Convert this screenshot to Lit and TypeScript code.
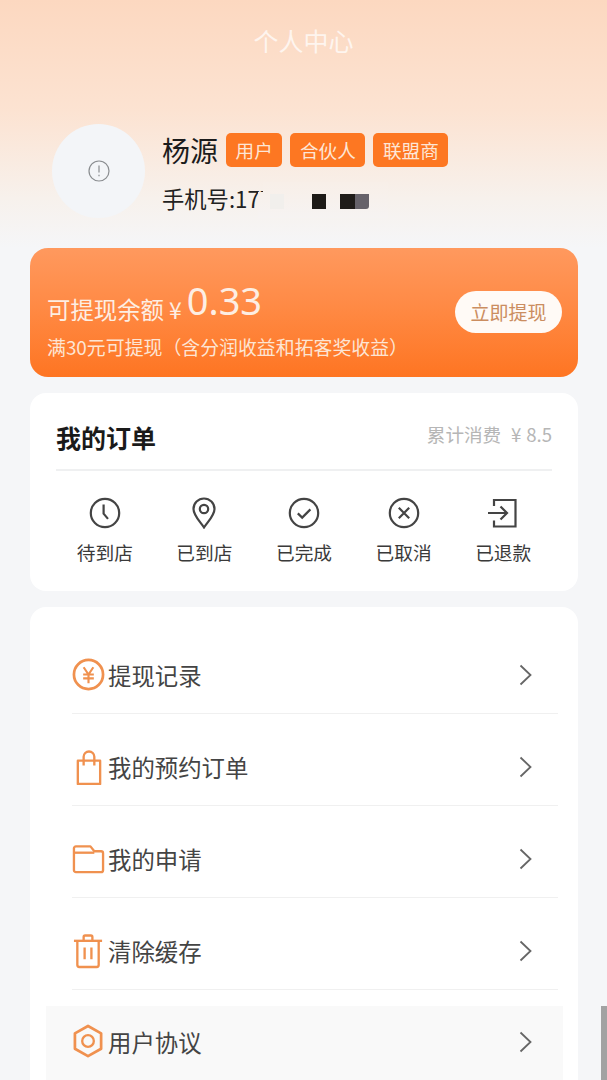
import { LitElement, html, css, svg } from "lit";
import { customElement } from "lit/decorators.js";

const orderIcons = {
  clock: svg`<circle cx="16" cy="16" r="14.2"/><path d="M14.6 7.5v9.2l4.4 5.2"/>`,
  pin: svg`<path d="M16 30.5 C12 24.5 5.5 18.5 5.5 12 A10.5 10.5 0 0 1 26.5 12 C26.5 18.5 20 24.5 16 30.5Z"/><circle cx="16" cy="12" r="4.2"/>`,
  check: svg`<circle cx="16" cy="16" r="14.2"/><path d="M9.8 16.4l4.4 4.2 8.2-8.2"/>`,
  cross: svg`<circle cx="16" cy="16" r="14.2"/><path d="M10.8 10.8l10.4 10.4M21.2 10.8L10.8 21.2"/>`,
  out: svg`<path d="M7 9V3h21.5v26.5H7v-6"/><path d="M1 16h19M13.5 9.5L20 16l-6.5 6.5"/>`,
};

const orders = [
  ["待到店", orderIcons.clock],
  ["已到店", orderIcons.pin],
  ["已完成", orderIcons.check],
  ["已取消", orderIcons.cross],
  ["已退款", orderIcons.out],
] as const;

const menuIcons = {
  yen: svg`<circle cx="17" cy="18" r="15" stroke-width="2.8"/><path d="M12 10.5l5 7.5 5-7.5M11.5 18h11M11.5 22h11M17 18v9" stroke-width="2.2"/>`,
  bag: svg`<path d="M6 12h23v24H6z"/><path d="M12 17V8a5.5 5.5 0 0 1 11 0v9"/>`,
  folder: svg`<path d="M2 12V7.5a2 2 0 0 1 2-2h15l4 5h7a2 2 0 0 1 2 2V30a2 2 0 0 1-2 2H4a2 2 0 0 1-2-2z"/><path d="M2 12h21"/>`,
  trash: svg`<path d="M2 8h29"/><path d="M12 8V4a1.5 1.5 0 0 1 1.5-1.5h6A1.5 1.5 0 0 1 21 4v4"/><path d="M5.5 8v25a2 2 0 0 0 2 2h18a2 2 0 0 0 2-2V8"/><path d="M13 15v12M20 15v12"/>`,
  nut: svg`<path d="M16.5 2l13.5 7.6v15.8l-13.5 7.6L3 25.4V9.6z" stroke-width="2.8"/><circle cx="16.5" cy="17.5" r="6" stroke-width="2.4"/>`,
};

const menu = [
  ["提现记录", menuIcons.yen],
  ["我的预约订单", menuIcons.bag],
  ["我的申请", menuIcons.folder],
  ["清除缓存", menuIcons.trash],
  ["用户协议", menuIcons.nut],
] as const;

@customElement("app-root")
export class AppRoot extends LitElement {
  static styles = css`
    :host {
      display: block;
      position: relative;
      width: 607px;
      height: 1080px;
      overflow: hidden;
      background: #f5f6f8;
      font-family: "Noto Sans CJK SC", "Noto Sans", sans-serif;
      color: #333;
    }
    .top {
      height: 248px;
      background: linear-gradient(180deg, #fcd8c0 0%, #fce3d2 45%, #f7f1ec 80%, #f5f6f8 100%);
    }
    .title {
      padding-top: 22px;
      height: 36px;
      line-height: 36px;
      text-align: center;
      font-size: 25px;
      color: rgba(255, 255, 255, 0.72);
    }
    .profile {
      display: flex;
      gap: 17px;
      margin: 66px 0 0 52px;
    }
    .avatar {
      width: 93px;
      height: 94px;
      border-radius: 50%;
      background: #f3f5f8;
      display: flex;
      align-items: center;
      justify-content: center;
    }
    .avatar svg {
      width: 24px;
      height: 24px;
      fill: none;
      stroke: #8a8d90;
      stroke-width: 1.2;
    }
    .info {
      display: flex;
      flex-direction: column;
      padding-top: 9px;
    }
    .nameline {
      display: flex;
      align-items: center;
      gap: 8px;
      height: 34px;
    }
    .name {
      font-size: 28px;
      line-height: 34px;
      color: #1c1c1c;
    }
    .tag {
      height: 34px;
      line-height: 34px;
      padding: 0 9.6px;
      border-radius: 5px;
      background: #fd7722;
      color: #fde6d6;
      font-size: 18.6px;
    }
    .phone {
      position: relative;
      margin-top: 15px;
      font-size: 22.3px;
      line-height: 32px;
      height: 32px;
      color: #222;
      width: 286px;
    }
    .mask {
      position: absolute;
      left: 96px;
      top: 0;
      width: 130px;
      height: 36px;
      background: linear-gradient(180deg, #f8efe8, #f6f3f2);
      clip-path: polygon(5px 0, 100% 0, 100% 100%, 0 100%, 0 10px, 5px 10px);
    }
    .block {
      position: absolute;
      top: 12px;
      height: 15px;
    }
    .b0 { left: 12px; width: 14px; background: #f1efec; }
    .b1 { left: 54px; width: 14px; background: #1d1a17; }
    .b2 { left: 82px; width: 15px; background: #1f1c19; }
    .b3 { left: 97px; width: 14px; background: #66626a; border-radius: 0 0 3px 0; }
    .balance {
      margin: 0 29px 0 30px;
      height: 129px;
      box-sizing: border-box;
      border-radius: 18px;
      background: linear-gradient(180deg, #ff995e 0%, #ff8a45 45%, #fe7522 100%);
      display: flex;
      align-items: center;
      justify-content: space-between;
      padding: 12px 16px 0 17px;
      color: #fdeee3;
    }
    .amount {
      display: flex;
      align-items: baseline;
      height: 54px;
      line-height: 54px;
      font-size: 23.4px;
    }
    .yen { margin-left: 5px; font-size: 23px; }
    .num {
      font-size: 38px;
      margin-left: 5px;
      font-family: "Noto Sans", sans-serif;
      font-weight: 400;
      transform: translateY(-4px);
    }
    .note {
      font-size: 18.9px;
      line-height: 26px;
      margin-top: 3px;
      color: #fde5d4;
    }
    .btn {
      width: 107px;
      height: 42px;
      line-height: 42px;
      margin-top: -13px;
      border-radius: 21px;
      background: #fffaf6;
      color: #cb8d60;
      text-align: center;
      font-size: 19px;
    }
    .orders {
      margin: 16px 29px 0 30px;
      height: 198px;
      box-sizing: border-box;
      border-radius: 16px;
      background: #fff;
      padding: 0 26px;
    }
    .ohead {
      display: flex;
      justify-content: space-between;
      height: 78px;
      border-bottom: 2px solid #eff0f1;
      box-sizing: border-box;
      align-items: center;
    }
    .otitle {
      font-size: 25px;
      font-weight: 700;
      color: #1a1a1a;
      line-height: 34px;
      margin-top: 12px;
    }
    .ototal {
      display: flex;
      font-size: 18.6px;
      color: #b6b6b6;
      line-height: 28px;
      margin-top: 6px;
    }
    .ototal i {
      font-style: normal;
      margin: 0 3px 0 8px;
      width: 14px;
      text-align: center;
    }
    .ogrid {
      display: grid;
      grid-template-columns: repeat(5, 99.6px);
      margin: 0 0 0 -1px;
      padding-top: 26px;
    }
    .oitem {
      display: flex;
      flex-direction: column;
      align-items: center;
    }
    .oitem svg {
      width: 32px;
      height: 32px;
      fill: none;
      stroke: #444;
      stroke-width: 2.2;
    }
    .oitem span {
      margin-top: 9px;
      font-size: 18.7px;
      line-height: 28px;
      color: #3a3a3a;
    }
    .menu {
      margin: 16px 29px 0 30px;
      height: 600px;
      box-sizing: border-box;
      border-radius: 16px;
      background: #fff;
      padding-top: 15px;
    }
    .row {
      height: 92px;
      box-sizing: border-box;
      margin: 0 20px 0 42px;
      border-bottom: 1px solid #f0f0f0;
      display: flex;
      align-items: center;
      font-size: 23.4px;
      color: #444;
      padding: 14px 26px 0 0;
    }
    .row:last-child {
      border-bottom: 0;
      margin: 16px 15px 0 16px;
      padding: 0 31px 2px 26px;
      height: 74px;
      background: #f9f9f9;
    }
    .ico {
      width: 36px;
      flex: none;
      display: flex;
      align-items: center;
    }
    .ico svg {
      width: 33px;
      height: 36px;
      fill: none;
      stroke: #f0914f;
      stroke-width: 2.4;
      stroke-linejoin: round;
    }
    .label { flex: 1; }
    .chev {
      width: 13px;
      height: 22px;
      fill: none;
      stroke: #666;
      stroke-width: 1.8;
    }
    .scrollbar {
      position: absolute;
      right: 0;
      bottom: 0;
      width: 6px;
      height: 74px;
      background: #a2a2a2;
    }
  `;

  render() {
    return html`
      <div class="top">
        <div class="title">个人中心</div>
        <div class="profile">
          <div class="avatar">
            <svg viewBox="0 0 24 24">
              <circle cx="12" cy="12" r="10"/>
              <path d="M12 6.5v7M12 15.8v1.4"/>
            </svg>
          </div>
          <div class="info">
            <div class="nameline">
              <span class="name">杨源</span>
              <span class="tag">用户</span>
              <span class="tag">合伙人</span>
              <span class="tag">联盟商</span>
            </div>
            <div class="phone">手机号:177
              <div class="mask">
                <i class="block b0"></i>
                <i class="block b1"></i>
                <i class="block b2"></i>
                <i class="block b3"></i>
              </div>
            </div>
          </div>
        </div>
      </div>

      <div class="balance">
        <div>
          <div class="amount">
            <span>可提现余额</span><span class="yen">¥</span><span class="num">0.33</span>
          </div>
          <div class="note">满30元可提现（含分润收益和拓客奖收益）</div>
        </div>
        <div class="btn">立即提现</div>
      </div>

      <div class="orders">
        <div class="ohead">
          <span class="otitle">我的订单</span>
          <span class="ototal">累计消费<i>¥</i>8.5</span>
        </div>
        <div class="ogrid">
          ${orders.map(
            ([label, icon]) => html`
              <div class="oitem">
                <svg viewBox="0 0 32 32">${icon}</svg>
                <span>${label}</span>
              </div>
            `
          )}
        </div>
      </div>

      <div class="menu">
        ${menu.map(
          ([label, icon]) => html`
            <div class="row">
              <span class="ico"><svg viewBox="0 0 34 37">${icon}</svg></span>
              <span class="label">${label}</span>
              <svg class="chev" viewBox="0 0 13 22"><path d="M1.5 1.5L11.5 11 1.5 20.5"/></svg>
            </div>
          `
        )}
      </div>
      <div class="scrollbar"></div>
    `;
  }
}
